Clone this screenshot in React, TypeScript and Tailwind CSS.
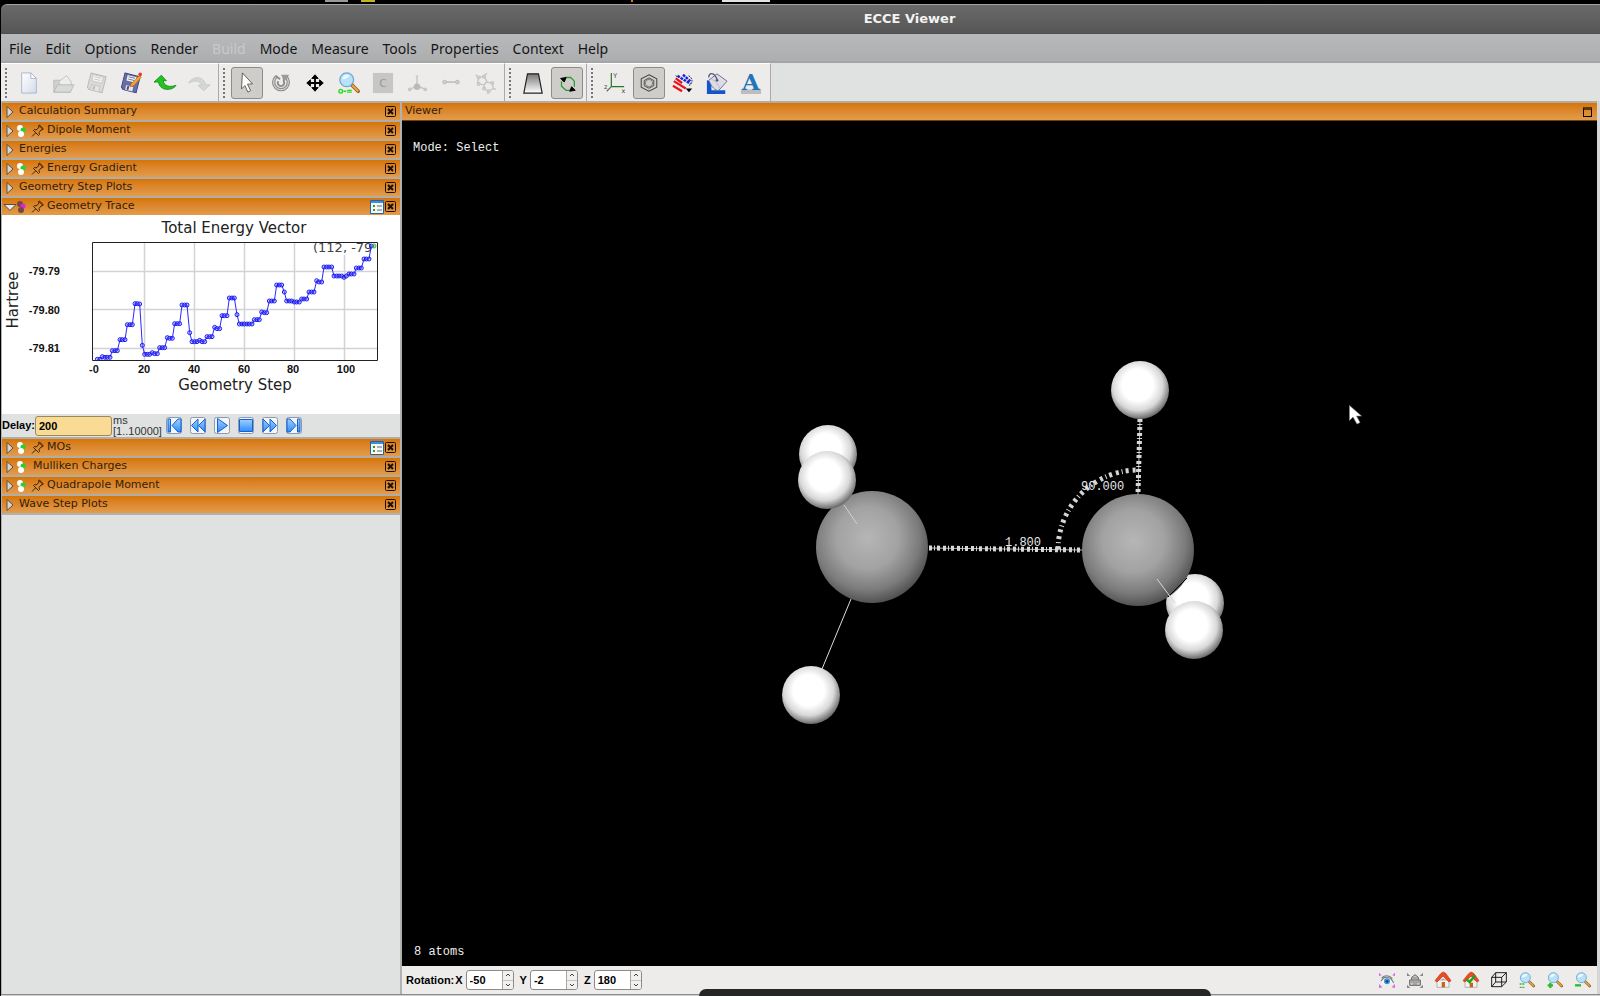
import { useState } from "react";
import type { ReactNode } from "react";

const menus = ["File", "Edit", "Options", "Render", "Build", "Mode", "Measure", "Tools", "Properties", "Context", "Help"];

// energy value for every geometry step, in plot units
const trace = [
  448, 448, 440, 442, 442, 442, 422, 422, 422, 389, 389, 389, 344, 344, 344, 281, 281, 282, 406, 433,
  433, 433, 428, 431, 431, 413, 413, 413, 383, 385, 385, 341, 341, 341, 285, 285, 285, 368, 395, 395,
  395, 391, 395, 395, 380, 380, 380, 352, 356, 356, 317, 317, 317, 264, 264, 264, 314, 342, 342, 342,
  342, 342, 342, 329, 329, 329, 306, 308, 308, 273, 273, 273, 225, 225, 225, 246, 273, 273, 273, 276,
  276, 276, 267, 267, 267, 246, 246, 246, 212, 216, 216, 171, 171, 171, 171, 198, 198, 198, 198, 202,
  198, 192, 192, 192, 174, 174, 174, 147, 147, 147, 108, 108,
];

function Icon({ children, size = 24 }: { children: ReactNode; size?: number }) {
  return (
    <svg width={size} height={size} viewBox="0 0 24 24" fill="none" aria-hidden="true" className="overflow-visible">
      {children}
    </svg>
  );
}

function Lens({ mark }: { mark?: ReactNode }) {
  return (
    <>
      <path d="M15 14l7 7" stroke="#8a6428" strokeWidth="4" strokeLinecap="round" />
      <path d="M16 15l5.500 5.500" stroke="#f0a63c" strokeWidth="2.200" strokeLinecap="round" />
      <circle cx="9.500" cy="8.500" r="7.500" fill="#b9e2f8" stroke="#6fa5cf" strokeWidth="1.300" />
      <path d="M4.500 8a5 5 0 0 1 8-4c-2 3-5 4-8 4z" fill="#eefaff" />
      {mark}
    </>
  );
}

function Floppy({ body, dark }: { body: string; dark: string }) {
  return (
    <g transform="rotate(14 12 12)">
      <path d="M3 3h17v18H5l-2-2z" fill={body} stroke={dark} />
      <path d="M6 4h11v7H6z" fill="#f4f4f4" stroke={dark} strokeWidth=".6" />
      <path d="M8 6h7M8 8.500h7" stroke={dark} strokeWidth=".7" />
      <path d="M7 15h9v6H7z" fill="#e6e6e6" stroke={dark} strokeWidth=".6" />
      <path d="M9 16h2v4H9z" fill={dark} />
    </g>
  );
}

const icons = {
  newFile: (
    <>
      <path d="M4 1h10l6 6v16H4z" fill="url(#paper)" stroke="#a9b3c6" />
      <path d="M14 1v6h6z" fill="#fff" stroke="#a9b3c6" />
    </>
  ),
  open: (
    <>
      <path d="M2 22V9h7l2 2h9v11z" fill="#cfd1cf" stroke="#b8bab8" />
      <path d="M8 10l8-6 5 7v6H8z" fill="#eceded" stroke="#bfc1bf" />
      <path d="M2 22l4-8h18l-4 8z" fill="#d8dad8" stroke="#b8bab8" />
    </>
  ),
  save: <Floppy body="#d9d9d9" dark="#b7b7b7" />,
  saveAs: (
    <>
      <Floppy body="#6670ad" dark="#3c437d" />
      <path d="M12 13l9-9 2 2-8 9-4 1z" fill="#f7a22b" stroke="#b96b10" strokeWidth=".7" />
      <circle cx="22" cy="2.500" r="2" fill="#e9352a" />
    </>
  ),
  undo: <path d="M0 11L8 3.500l5.500 6H10c1 5 6 8 14 5-3 6-18 7-19-3.500z" fill="#22c322" stroke="#087d0d" strokeWidth=".8" />,
  redo: <path d="M24 14l-7 6.500-6-6h4C14 10 8 8 1 12 4 5 17 3 19 14z" fill="#d5d9d5" stroke="#bcc1bc" strokeWidth=".8" />,
  select: <path d="M7 1l11 12-5.500.3 3.500 7-3 1.700-3.300-7.200L6 18.500z" fill="#fff" stroke="#555" />,
  rotate: (
    <>
      <path d="M7 5a8 8 0 1 0 10 0" stroke="#8b8b8b" strokeWidth="3.600" />
      <path d="M7 5a8 8 0 1 0 10 0" stroke="#d4d4d4" strokeWidth="1.200" />
      <path d="M9 10a3.500 3.500 0 1 0 6 0V4M11 8l-5-4" stroke="#8b8b8b" strokeWidth="2" />
      <path d="M12 3h9l-5 7z" fill="#9a9a9a" />
    </>
  ),
  move: (
    <>
      <path d="M12 5v14M5 12h14" stroke="#000" strokeWidth="2" />
      <path d="M12 3l3.500 4h-7zM12 21l3.500-4h-7zM3 12l4-3.500v7zM21 12l-4-3.500v7z" fill="#000" stroke="#000" />
    </>
  ),
  zoom: (
    <Lens
      mark={
        <>
          <circle cx="3" cy="21" r="2" stroke="#20dd20" strokeWidth="1.500" />
          <path d="M6 21h3M10 20h5M10 22h5" stroke="#20dd20" strokeWidth="1.500" />
        </>
      }
    />
  ),
  build: (
    <>
      <path d="M1 1h22v22H1z" fill="#c6c6c6" />
      <text x="12" y="16" fontSize="12" textAnchor="middle" fill="#999" fontFamily="DejaVu Sans, sans-serif">C</text>
    </>
  ),
  tripod: (
    <>
      <path d="M12 15V6M12 15l-8 4M12 15l9 4" stroke="#c2c4c2" strokeWidth="1.500" />
      <circle cx="12" cy="16" r="3.500" fill="#b9bbb9" />
      <circle cx="12" cy="5" r="1.500" fill="#ccc" />
      <circle cx="4" cy="19" r="2" fill="#c6c8c6" />
      <circle cx="21" cy="19" r="2" fill="#c6c8c6" />
    </>
  ),
  bond: (
    <>
      <path d="M4 11h16" stroke="#b9b9b9" strokeWidth="1.600" />
      <circle cx="5" cy="11" r="2" fill="#d2d2d2" stroke="#b4b4b4" />
      <circle cx="19" cy="11" r="2" fill="#d2d2d2" stroke="#b4b4b4" />
    </>
  ),
  rings: (
    <g stroke="#c5c7c5" strokeWidth="1.500">
      <path d="M5 6l6-1 3 5-3 4-6-1-1-4zM14 11l6 1 1 6-5 3-5-3v-4zM5 6L2 3M11 5l3-4M21 18l3 1M16 21l-1 3" />
      <g fill="#d6d8d6">
        <circle cx="5" cy="6" r="1.500" />
        <circle cx="11" cy="5" r="1.500" />
        <circle cx="5" cy="13" r="1.500" />
        <circle cx="20" cy="12" r="1.500" />
        <circle cx="11" cy="18" r="1.500" />
        <circle cx="16" cy="21" r="1.500" />
      </g>
    </g>
  ),
  perspective: <path d="M6 2h12l4 21H2z" fill="url(#persp)" stroke="#222" strokeWidth="1.300" />,
  refresh: (
    <>
      <path d="M10 6h6l4 4v6M17 20h-6l-5-4.500V10" stroke="#2e9b34" strokeWidth="1.400" />
      <path d="M5 7l6-1-2 5zM21 20l-6 1 2-5z" fill="#000" stroke="#000" />
    </>
  ),
  axes: (
    <>
      <path d="M8 16V1M8 16h14" stroke="#1d7a23" strokeWidth="1.300" />
      <path d="M8 16l-5 5" stroke="#666" strokeWidth="1.300" />
      <g fontSize="7" fill="#444" fontFamily="DejaVu Sans, sans-serif">
        <text x="10" y="6">Y</text>
        <text x="19" y="23">x</text>
        <text x="0" y="18">z</text>
      </g>
    </>
  ),
  benzene: (
    <>
      <path d="M12 3l8.500 4.500v9L12 21l-8.500-4.500v-9z" stroke="#444" strokeWidth="1.100" />
      <path d="M12 6.500l5.200 2.800v5.600L12 17.700l-5.200-2.800V9.300z" stroke="#444" />
      <circle cx="12" cy="12.100" r="4" stroke="#666" strokeWidth=".8" />
    </>
  ),
  style: (
    <>
      <path d="M2 10l13 8M1 15l10 6M4 7l7 5" stroke="#e8131b" strokeWidth="2.400" />
      <path d="M6 4l14 9M12 3l8 7" stroke="#1722dc" strokeWidth="2.600" strokeDasharray="3 1" />
      <path d="M18 4c5 3 5 7 1 11M4 4l3 2" stroke="#222" strokeDasharray="2 1" />
      <path d="M15 18h7l-3.500 4z" fill="#000" />
    </>
  ),
  paint: (
    <>
      <path d="M1 9c4 0 5 4 5 11h15v4H1z" fill="#1554d1" />
      <path d="M3 9l9-7 11 8-9 10c-4 1-8-4-11-11z" fill="#dcdce7" stroke="#666a86" />
      <path d="M6 8c4 1 7 5 9 10" stroke="#b4b6cc" />
      <path d="M3 6c0-6 6-6 9 2" stroke="#555a73" strokeWidth="1.500" />
      <circle cx="12" cy="9" r="1.500" fill="#555a73" />
    </>
  ),
  label: (
    <>
      <path d="M1 19h22v5H1z" fill="#bcbcbc" />
      <text x="12" y="20" fontSize="25" fontWeight="bold" textAnchor="middle" fill="#2374b8" fontFamily="DejaVu Serif, serif">A</text>
    </>
  ),
  eye: (
    <>
      <path d="M0 6V1l4 4zM24 6V1l-4 4zM0 24v-6l5 5zM24 24v-6l-5 5z" fill="#d56ae0" />
      <path d="M3 14c4-8 13-9 19 2M4 9c4-4 11-5 16 1" stroke="#777" strokeWidth="1.600" />
      <path d="M3 15c5-6 12-5 17 0-5 6-13 5-17 0z" fill="#f6f8fb" />
      <circle cx="12" cy="14" r="4.500" fill="#3d8fe0" />
      <circle cx="12" cy="14" r="1.800" fill="#103a6b" />
    </>
  ),
  snapshot: (
    <>
      <path d="M0 6V1l5 5zM24 6V1l-5 5zM0 24v-5l5 5zM24 24v-5l-5 5z" fill="#888" />
      <path d="M4 12h16v8H4zM7 12V8l5-4 5 4v4" fill="#c9c9c9" stroke="#666" strokeWidth="1.500" />
      <path d="M5 15h14M8 9h8M9 18h6" stroke="#777" strokeWidth="1.300" />
    </>
  ),
  home: (
    <>
      <path d="M3 12h18v11H3z" fill="#f3f1ee" stroke="#999" />
      <path d="M10 15h5v8h-5z" fill="#c8641e" />
      <path d="M0 13L8 3l4-3 4 2 8 11-3 2-9-9-9 9z" fill="#ee4a20" stroke="#c03310" />
      <path d="M10 10h4v2h-4z" fill="#a7a7a7" />
    </>
  ),
  homeSet: (
    <>
      <path d="M3 12h18v11H3z" fill="#f3f1ee" stroke="#999" />
      <path d="M10 16h5v7h-5z" fill="#c8641e" />
      <path d="M0 13L8 3l4-3 4 2 8 11-3 2-9-9-9 9z" fill="#ee4a20" stroke="#c03310" />
      <path d="M5 11l5 4 8-10" stroke="#19a51c" strokeWidth="3.500" />
    </>
  ),
  cube: (
    <path d="M1 8h15v14H1zM7 1h16v14H7zM1 8l6-7M16 8l7-7M1 22l6-7M16 22l7-7" stroke="#111" strokeWidth="1.400" />
  ),
  zoomFit: <Lens mark={<path d="M1 18h7M1 23h7" stroke="#41b541" strokeWidth="2" strokeDasharray="3 1" />} />,
  zoomIn: <Lens mark={<path d="M1 20h8M5 16v8" stroke="#2cba2c" strokeWidth="3.500" />} />,
  zoomOut: <Lens mark={<path d="M0 20h9" stroke="#2cba2c" strokeWidth="3.500" />} />,
};

type IconName = keyof typeof icons;

const toolbars: [IconName, string, boolean?][][] = [
  [["newFile", "New"], ["open", "Open"], ["save", "Save"], ["saveAs", "Save As"], ["undo", "Undo"], ["redo", "Redo"]],
  [
    ["select", "Select", true], ["rotate", "Rotate"], ["move", "Translate"], ["zoom", "Zoom"],
    ["build", "Element"], ["tripod", "Geometry"], ["bond", "Bond"], ["rings", "Fragment"],
  ],
  [["perspective", "Perspective"], ["refresh", "Refresh", true]],
  [["axes", "Axes"], ["benzene", "Rings", true], ["style", "Style"], ["paint", "Color"], ["label", "Labels"]],
];

const viewTools: [IconName, string][] = [
  ["eye", "Look at"], ["snapshot", "Lock view"], ["home", "Home"], ["homeSet", "Set home"],
  ["cube", "Bounding box"], ["zoomFit", "Zoom to fit"], ["zoomIn", "Zoom in"], ["zoomOut", "Zoom out"],
];

function PanelHeader({ title, balls, pin, list, open }: { title: string; balls?: boolean; pin?: boolean; list?: boolean; open?: boolean }) {
  return (
    <div className="flex h-[19px] items-center border-t-2 border-[#b0aca8] bg-linear-to-b from-[#d67500] to-[#e29c4a] pr-[3px]">
      <button aria-label={"Toggle " + title} className="w-[15px] shrink-0">
        <svg width="15" height="14" viewBox="0 0 15 14">
          {open ? (
            <path d="M2 4.500h12L8 10.500z" fill="#e8e8e8" stroke="#5a4a38" />
          ) : (
            <path d="M5 1.500v11l6-5.500z" fill="#d6d3d0" stroke="#5b5045" />
          )}
        </svg>
      </button>
      {balls && (
        <svg width="12" height="14" viewBox="0 0 12 14" className="shrink-0">
          <circle cx="3" cy="4" r="3" fill={open ? "#7a4444" : "#fff"} />
          <circle cx="6" cy="6" r="2.500" fill={open ? "#d726d7" : "#1fd335"} />
          <circle cx="4" cy="10" r="3" fill={open ? "#7a4444" : "#fff"} />
        </svg>
      )}
      {pin && (
        <svg width="14" height="14" viewBox="0 0 14 14" fill="none" stroke="#3d2203" className="ml-0.5 shrink-0">
          <path d="M1 12.500l3.500-3.500M2.500 6.500l5 5 1-1-.5-2L10 6l2-.5-4-4L7.500 4 5 6l-1.500-.5zM7.500 1.500L8.500 1 12 4.500l-.5 1" />
        </svg>
      )}
      <h2 className="ml-0.5 flex-1 pb-0.5 whitespace-nowrap text-[11px] leading-[14px] text-[#33210a]">
        <span className={balls && !pin ? "ml-0.5" : ""}>{title}</span>
      </h2>
      {list && (
        <button aria-label={title + " options"}>
          <svg width="14" height="14" viewBox="0 0 14 14">
            <path d="M.5.5h13v13H.5z" fill="#f4f8f2" stroke="#2961a5" />
            <path d="M1 1h12v2H1z" fill="#3c8be8" />
            <path d="M3 6h2M3 10h2" stroke="#289b28" strokeWidth="2" />
            <path d="M7 6h5M7 10h5" stroke="#666" />
          </svg>
        </button>
      )}
      <button aria-label={"Close " + title}>
        <svg width="13" height="13" viewBox="0 0 13 13">
          <rect x="1.500" y="1.500" width="10" height="10" rx="1" fill="none" stroke="#1c0f00" />
          <path d="M4 4l5 5M9 4l-5 5" stroke="#1c0f00" strokeWidth="2" />
        </svg>
      </button>
    </div>
  );
}

function EnergyPlot() {
  const points = trace.map((v, i) => [Math.round(285 + 7.47 * (i + 1)) / 3 - 2, v / 3 - 5]);
  return (
    <svg viewBox="0 0 398 199" className="block w-full bg-white" fontFamily="DejaVu Sans, sans-serif">
      <text x="232" y="18" fontSize="15" textAnchor="middle" fill="#222">Total Energy Vector</text>
      <text x="233" y="175" fontSize="15" textAnchor="middle" fill="#222">Geometry Step</text>
      <text transform="rotate(-90 16 85)" x="16" y="85" fontSize="15" textAnchor="middle" fill="#222">Hartree</text>
      <path d="M142.500 27v118M192.500 27v118M242.500 27v118M292.500 27v118M342.500 27v118M90 56.500h285M90 94.500h285M90 133.500h285" stroke="#d3d3d3" strokeWidth="1.500" />
      <clipPath id="plotArea"><path d="M90 27h287v119H90z" /></clipPath>
      <path d="M310 28h65v12h-65z" fill="#fff" />
      <text x="311" y="37" fontSize="13" fill="#444">(112, -79</text>
      <g clipPath="url(#plotArea)">
        <polyline points={points.map((p) => p.join(",")).join(" ")} fill="none" stroke="#2a2aff" />
        {points.map(([x, y], i) => (
          <circle key={i} cx={x} cy={y} r="2" fill="#6f6fff" fillOpacity=".4" stroke={i === points.length - 1 ? "#16c416" : "#1010f0"} strokeWidth=".9" />
        ))}
      </g>
      <path d="M90.500 27.500h285v118h-285z" fill="none" stroke="#222" />
      <g fontFamily="Liberation Sans, sans-serif" fontWeight="bold" fontSize="11" fill="#111">
        <g textAnchor="end">
          <text x="58" y="60">-79.79</text>
          <text x="58" y="99">-79.80</text>
          <text x="58" y="137">-79.81</text>
        </g>
        <g textAnchor="middle">
          <text x="92" y="158">-0</text>
          <text x="142" y="158">20</text>
          <text x="192" y="158">40</text>
          <text x="242" y="158">60</text>
          <text x="291" y="158">80</text>
          <text x="344" y="158">100</text>
        </g>
      </g>
    </svg>
  );
}

const playback: [string, string][] = [
  ["First", "M2 2v13h2.500V2zM15 2v13h-3L6 8.500 12 2z"],
  ["Rewind", "M8 2v13L1.500 8.500zM15 2v13L8.500 8.500z"],
  ["Play", "M3.500 1.500v14l10-7z"],
  ["Stop", "M1.500 2.500h13v12h-13z"],
  ["Forward", "M1 2v13l6.500-6.500zM8 2v13l6.500-6.500z"],
  ["Last", "M11.500 2v13H14V2zM1 2v13h3l6-6.500L4 2z"],
];

function Delay() {
  const [delay, setDelay] = useState("200");
  return (
    <div className="flex h-[23px] items-center bg-[#e0e2e1] font-['Liberation_Sans',sans-serif] text-[11px] text-black">
      <label htmlFor="delay" className="w-[33px] shrink-0 font-bold">Delay:</label>
      <input
        id="delay"
        value={delay}
        onChange={(e) => setDelay(e.target.value)}
        className="h-5 w-[77px] rounded-[3px] border border-[#9b875c] bg-[#fadb95] px-[3px] font-bold"
      />
      <div className="ml-px w-[53px] text-[11px] leading-[11px] text-[#333]">
        <p>ms</p>
        <p>[1..10000]</p>
      </div>
      <div className="flex gap-2">
        {playback.map(([name, d]) => (
          <button key={name} aria-label={name}>
            <svg width="16" height="17" viewBox="0 0 16 17">
              <rect x=".5" y=".5" width="15" height="16" rx="2" fill="#f2f5fa" stroke="#8d9ab0" />
              <path d={d} fill="url(#media)" stroke="#1560cf" strokeLinejoin="round" />
            </svg>
          </button>
        ))}
      </div>
    </div>
  );
}

function Hydrogen({ x, y }: { x: number; y: number }) {
  return <circle cx={x} cy={y} r="29" fill="url(#hydrogen)" />;
}

function Molecule() {
  return (
    <svg viewBox="0 0 1195 845" className="h-full w-full" fill="none">
      <defs>
        <radialGradient id="hydrogen" cx=".46" cy=".42" r=".6">
          <stop offset=".45" stopColor="#fff" />
          <stop offset=".72" stopColor="#d8d8d8" />
          <stop offset="1" stopColor="#5c5c5c" />
        </radialGradient>
        <radialGradient id="carbon" cx=".46" cy=".42" r=".62">
          <stop offset="0" stopColor="#b6b6b6" />
          <stop offset=".45" stopColor="#a2a2a2" />
          <stop offset=".75" stopColor="#7b7b7b" />
          <stop offset="1" stopColor="#444" />
        </radialGradient>
      </defs>
      {/* bonds */}
      <path d="M449 478L420 548" stroke="#ddd" />
      <path d="M527 427L680 429M738 298L736 373" stroke="#bbb" />
      <path d="M527 427L680 429M738 298L736 373" stroke="#d8d8d8" strokeWidth="5" strokeDasharray="3 2 1 2 3 3" />
      <path d="M656 428A80 80 0 0 1 736 349" stroke="#d6d6d6" strokeWidth="5" strokeDasharray="3 3 1 3 3 4" />
      {/* left carbon */}
      <circle cx="470" cy="426" r="56" fill="url(#carbon)" />
      <path d="M442 384l13 19" stroke="#d0d0d0" />
      <Hydrogen x={426} y={333} />
      <Hydrogen x={425} y={359} />
      <Hydrogen x={409} y={574} />
      {/* right carbon */}
      <Hydrogen x={793} y={482} />
      <circle cx="736" cy="429" r="56" fill="url(#carbon)" />
      <path d="M766 476l19-19" stroke="#000" />
      <path d="M755 458l18 24" stroke="#d8d8d8" />
      <Hydrogen x={792} y={509} />
      <Hydrogen x={738} y={269} />
      <g fontFamily="Liberation Mono, monospace" fontSize="12" fill="#e8e8e8">
        <text x="603" y="425">1.800</text>
        <text x="679" y="369">90.000</text>
      </g>
      {/* pointer */}
      <path d="M947.500 284.500v15l3.500-3.500 4 7 3-1.500-3.500-6.500h5z" fill="#fff" stroke="#888" strokeWidth=".6" />
    </svg>
  );
}

function Rotation({ axis, value }: { axis: string; value: string }) {
  const [angle, setAngle] = useState(value);
  return (
    <div className="mr-1.5 flex items-center gap-[3px]">
      <label htmlFor={"rotate" + axis}>{axis}</label>
      <div className="flex h-5 w-12 overflow-hidden rounded-[3px] border border-[#8d8b88] bg-white">
        <input
          id={"rotate" + axis}
          value={angle}
          onChange={(e) => setAngle(e.target.value)}
          className="w-[35px] min-w-0 px-[3px] outline-none"
        />
        <div className="flex flex-1 flex-col border-l border-[#a9a7a4] bg-[#f1f0ef]">
          <button aria-label={"Increase " + axis} onClick={() => setAngle(String(Number(angle) + 1))} className="flex flex-1 items-center justify-center border-b border-[#c5c3c0]">
            <svg width="6" height="4" fill="none" stroke="#444"><path d="M1 3l2-2 2 2" /></svg>
          </button>
          <button aria-label={"Decrease " + axis} onClick={() => setAngle(String(Number(angle) - 1))} className="flex flex-1 items-center justify-center">
            <svg width="6" height="4" fill="none" stroke="#444"><path d="M1 1l2 2 2-2" /></svg>
          </button>
        </div>
      </div>
    </div>
  );
}

export default function App() {
  return (
    <div className="relative flex h-screen flex-col overflow-hidden bg-black pl-px font-['DejaVu_Sans',sans-serif]">
      <svg width="0" height="0" className="absolute">
        <linearGradient id="paper" x1="0" y1="0" x2="1" y2="1">
          <stop stopColor="#fff" />
          <stop offset="1" stopColor="#d3dcec" />
        </linearGradient>
        <linearGradient id="persp" x1="0" y1="0" x2="0" y2="1">
          <stop stopColor="#777" />
          <stop offset="1" stopColor="#fff" />
        </linearGradient>
        <linearGradient id="media" x1="0" y1="0" x2="0" y2="1">
          <stop stopColor="#9fd0ff" />
          <stop offset="1" stopColor="#2f8cff" />
        </linearGradient>
      </svg>

      {/* desktop panel behind the window */}
      <div className="flex h-1 shrink-0 items-start">
        <span className="ml-[324px] h-0.5 w-[23px] bg-[#999]" />
        <span className="ml-[13px] h-0.5 w-[14px] bg-[#c5b321]" />
        <span className="ml-[256px] h-0.5 w-0.5 bg-[#c5801f]" />
        <span className="ml-[89px] h-0.5 w-12 bg-[#e2e2e2]" />
      </div>

      <header className="flex h-[30px] shrink-0 items-center rounded-tl-md border-t border-b border-t-[#a4a4a4] border-b-[#505050] bg-linear-to-b from-[#6a6a6a] to-[#565656]">
        <h1 className="w-full pl-[218px] text-center text-[13px] font-bold text-[#f3f3f3]">ECCE Viewer</h1>
      </header>

      <nav className="flex h-[29px] shrink-0 items-center gap-[14px] border-b-2 border-[#a5a5a6] bg-linear-to-b from-[#b8b9bb] to-[#adaeb0] pt-0.5 pl-2 font-['Noto_Sans',sans-serif] text-[14px] text-[#151515]">
        {menus.map((m) => (
          <button key={m} disabled={m === "Build"} className="disabled:text-[#c9c9c9]">
            {m}
          </button>
        ))}
      </nav>

      <div className="flex h-[38px] shrink-0 bg-[#e0e2e1]">
        {toolbars.map((items, i) => (
          <div key={i} className="flex items-center gap-0.5 border-r border-t border-r-[#aaa] border-t-white bg-[#edeceb] pr-[3px]">
            <span className="mr-[3px] ml-1 h-[30px] w-[3px] border-l-2 border-dotted border-[#777]" />
            {items.map(([icon, name, pressed]) => (
              <button
                key={name}
                aria-label={name}
                aria-pressed={pressed}
                className={"flex size-8 items-center justify-center rounded-[3px] " + (pressed ? "border border-[#8f8d8a] bg-[#cfcdca]" : "")}
              >
                <Icon size={22}>{icons[icon]}</Icon>
              </button>
            ))}
          </div>
        ))}
      </div>

      <main className="flex min-h-0 flex-1 bg-[#b0b2b1] pl-px">
        <aside className="w-[398px] shrink-0 bg-[#e0e2e1]">
          <PanelHeader title="Calculation Summary" />
          <PanelHeader title="Dipole Moment" balls pin />
          <PanelHeader title="Energies" />
          <PanelHeader title="Energy Gradient" balls pin />
          <PanelHeader title="Geometry Step Plots" />
          <PanelHeader title="Geometry Trace" balls pin list open />
          <EnergyPlot />
          <Delay />
          <PanelHeader title="MOs" balls pin list />
          <PanelHeader title="Mulliken Charges" balls />
          <PanelHeader title="Quadrapole Moment" balls pin />
          <PanelHeader title="Wave Step Plots" />
          <div className="h-0.5 bg-[#b0b2b1]" />
        </aside>

        <section className="ml-0.5 flex min-w-0 flex-1 flex-col border-r-[3px] border-[#d4d5d4]">
          <div className="flex h-5 shrink-0 items-center justify-between border-t-2 border-b border-t-[#b0aca8] border-b-[#6d4210] bg-linear-to-b from-[#d67500] to-[#e29c4a] pr-[5px] pl-[3px]">
            <h2 className="pb-0.5 text-[11px] leading-[14px] text-[#33210a]">Viewer</h2>
            <button aria-label="Maximize" className="h-[10px] w-[9px] border border-t-[3px] border-black border-t-[#5a3a0c]" />
          </div>
          <div className="relative min-h-0 flex-1 bg-black font-['Liberation_Mono',monospace] text-[12px] leading-[14px] text-[#eee]">
            <Molecule />
            <p className="absolute top-5 left-[11px]">Mode: Select</p>
            <p className="absolute bottom-[7px] left-3">8 atoms</p>
          </div>
          <footer className="flex h-7 shrink-0 items-center bg-[#edeceb] pr-1.5 pl-1 font-['Liberation_Sans',sans-serif] text-[11px] font-bold text-black">
            <span className="mr-px">Rotation:</span>
            <Rotation axis="X" value="-50" />
            <Rotation axis="Y" value="-2" />
            <Rotation axis="Z" value="180" />
            <div className="ml-auto flex gap-3">
              {viewTools.map(([icon, name]) => (
                <button key={name} aria-label={name}>
                  <Icon size={16}>{icons[icon]}</Icon>
                </button>
              ))}
            </div>
          </footer>
        </section>
      </main>
      <div className="h-0.5 shrink-0 border-t border-[#8b8b8b] bg-[#d0d0d0]" />
      <div className="absolute bottom-0 left-[699px] h-[7px] w-[512px] rounded-t-lg bg-[#262626]" />
    </div>
  );
}
